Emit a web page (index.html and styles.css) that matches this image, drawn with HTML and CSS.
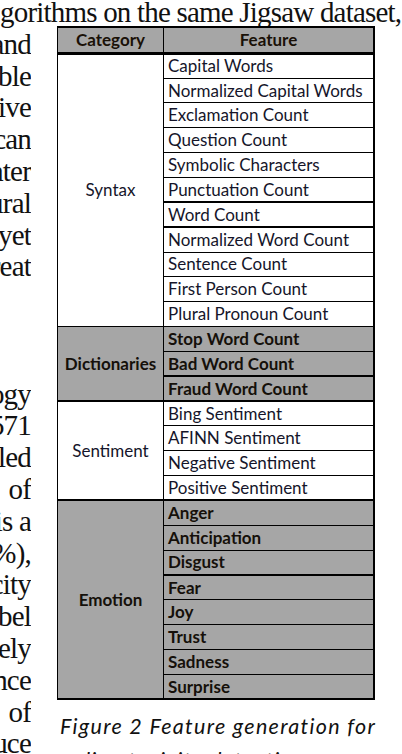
FILE: index.html
```html
<!DOCTYPE html>
<html lang="en">
<head>
<meta charset="utf-8">
<title>Feature generation table</title>
<link rel="stylesheet" href="styles.css">
</head>
<body>
<p class="top-line">gorithms on the same Jigsaw dataset,</p>
<div class="page">
  <div class="margin-text">
    <span>and</span>
    <span>able</span>
    <span>tive</span>
    <span>can</span>
    <span>later</span>
    <span>neural</span>
    <span>yet</span>
    <span>great</span>
    <span>&nbsp;</span>
    <span>&nbsp;</span>
    <span>&nbsp;</span>
    <span>methodology</span>
    <span>3571</span>
    <span>labeled</span>
    <span>of</span>
    <span>is a</span>
    <span>(6%),</span>
    <span>toxicity</span>
    <span>label</span>
    <span>likely</span>
    <span>instance</span>
    <span>of</span>
    <span>reduce</span>
  </div>
  <figure class="figure">
    <table class="features">
      <thead>
        <tr>
          <th class="cat-col">Category</th>
          <th>Feature</th>
        </tr>
      </thead>
      <tbody class="group">
        <tr><td class="cat" rowspan="11">Syntax</td><td>Capital Words</td></tr>
        <tr><td>Normalized Capital Words</td></tr>
        <tr><td>Exclamation Count</td></tr>
        <tr><td>Question Count</td></tr>
        <tr><td>Symbolic Characters</td></tr>
        <tr><td>Punctuation Count</td></tr>
        <tr class="thick"><td>Word Count</td></tr>
        <tr class="thick"><td>Normalized Word Count</td></tr>
        <tr><td>Sentence Count</td></tr>
        <tr><td>First Person Count</td></tr>
        <tr><td>Plural Pronoun Count</td></tr>
      </tbody>
      <tbody class="group shaded">
        <tr><td class="cat" rowspan="3">Dictionaries</td><td>Stop Word Count</td></tr>
        <tr><td>Bad Word Count</td></tr>
        <tr class="thick"><td>Fraud Word Count</td></tr>
      </tbody>
      <tbody class="group group-thick">
        <tr><td class="cat" rowspan="4">Sentiment</td><td>Bing Sentiment</td></tr>
        <tr><td>AFINN Sentiment</td></tr>
        <tr><td>Negative Sentiment</td></tr>
        <tr><td>Positive Sentiment</td></tr>
      </tbody>
      <tbody class="group shaded group-thick">
        <tr><td class="cat" rowspan="8">Emotion</td><td>Anger</td></tr>
        <tr><td>Anticipation</td></tr>
        <tr><td>Disgust</td></tr>
        <tr class="thick"><td>Fear</td></tr>
        <tr><td>Joy</td></tr>
        <tr><td>Trust</td></tr>
        <tr><td>Sadness</td></tr>
        <tr><td>Surprise</td></tr>
      </tbody>
    </table>
    <figcaption class="caption">Figure 2 Feature generation for online toxicity detection</figcaption>
  </figure>
</div>
</body>
</html>
```

FILE: styles.css
```css
html, body {
  margin: 0;
  padding: 0;
  background: #ffffff;
  overflow: hidden;
}

body {
  width: 402px;
  height: 754px;
  font-family: "Liberation Serif", "Times New Roman", serif;
  color: #111111;
}

.top-line {
  margin: -3px 0 0 0;
  font-size: 29px;
  line-height: 31.8px;
  letter-spacing: -0.8px;
  white-space: nowrap;
}

.page {
  display: flex;
  align-items: flex-start;
}

.margin-text {
  width: 31px;
  flex: none;
  display: flex;
  flex-direction: column;
  align-items: flex-end;
  overflow: hidden;
  font-size: 29px;
  line-height: 31.8px;
  letter-spacing: -0.8px;
  white-space: nowrap;
}

.figure {
  margin: -3px 0 0 26px;
  width: 318px;
  flex: none;
}

.features {
  width: 318px;
  border-collapse: collapse;
  table-layout: fixed;
  font-family: Lato, "Open Sans", sans-serif;
  font-size: 17px;
  color: #15152a;
  border: 2px solid #000;
  border-left-width: 1px;
}

.features th {
  height: 24px;
  background: #a6a6a6;
  font-weight: 700;
  text-align: center;
  padding: 0;
  border: 1px solid #000;
  border-bottom: 3px solid #000;
  color: #1a1108;
}

.features .cat-col {
  width: 105px;
}

.features td {
  height: 24.85px;
  padding: 0 0 0 4px;
  border: 1px solid #000;
  white-space: nowrap;
  line-height: 20px;
  box-sizing: border-box;
}

.features td.cat {
  text-align: center;
  padding: 0;
  vertical-align: middle;
}

.features tr.thick td {
  border-top-width: 2px;
}

.features .group-thick tr:first-child td {
  border-top-width: 2px;
}

.features .shaded td {
  background: #a6a6a6;
  font-weight: 700;
  color: #15100a;
}

.caption {
  margin: 9px -30px 0 3px;
  font-family: Lato, "Open Sans", sans-serif;
  font-style: italic;
  font-size: 21.5px;
  letter-spacing: 1.3px;
  line-height: 34px;
  color: #111;
}
```
